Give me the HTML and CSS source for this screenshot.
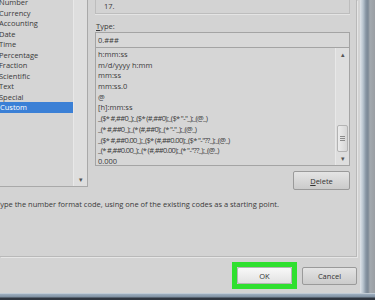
FILE: index.html
```html
<!DOCTYPE html>
<html>
<head>
  <meta charset="UTF-8">
  <title>Format Cells</title>
  <link rel="stylesheet" href="styles.css">
</head>
<body>
  <div class="window">
    <div class="dialog">
      <div class="panel">
        <div class="content">
          <div class="category-box">
            <ul class="category-list">
              <li>Number</li>
              <li>Currency</li>
              <li>Accounting</li>
              <li>Date</li>
              <li>Time</li>
              <li>Percentage</li>
              <li>Fraction</li>
              <li>Scientific</li>
              <li>Text</li>
              <li>Special</li>
              <li class="selected">Custom</li>
            </ul>
            <div class="scrollbar">
              <div class="track"></div>
              <div class="arrow">&#9662;</div>
            </div>
          </div>
          <div class="format-side">
            <div class="sample">17.</div>
            <div class="type-label"><u>T</u>ype:</div>
            <div class="type-input">0.###</div>
            <div class="type-box">
              <ul class="type-list">
                <li>h:mm:ss</li>
                <li>m/d/yyyy h:mm</li>
                <li>mm:ss</li>
                <li>mm:ss.0</li>
                <li>@</li>
                <li>[h]:mm:ss</li>
                <li class="code">_($* #,##0_);_($* (#,##0);_($* "-"_);_(@_)</li>
                <li class="code">_(* #,##0_);_(* (#,##0);_(* "-"_);_(@_)</li>
                <li class="code">_($* #,##0.00_);_($* (#,##0.00);_($* "-"??_);_(@_)</li>
                <li class="code">_(* #,##0.00_);_(* (#,##0.00);_(* "-"??_);_(@_)</li>
                <li>0.000</li>
              </ul>
              <div class="scrollbar">
                <div class="arrow">&#9652;</div>
                <div class="track">
                  <div class="thumb"><span></span><span></span><span></span></div>
                </div>
                <div class="arrow">&#9662;</div>
              </div>
            </div>
            <div class="delete-row">
              <button class="btn delete-btn"><u>D</u>elete</button>
            </div>
          </div>
        </div>
        <p class="hint">Type the number format code, using one of the existing codes as a starting point.</p>
      </div>
      <div class="footer">
        <div class="highlight">
          <button class="btn ok-btn">OK</button>
        </div>
        <button class="btn cancel-btn">Cancel</button>
      </div>
    </div>
    <div class="frame"></div>
  </div>
  <div class="taskbar"></div>
</body>
</html>
```

FILE: styles.css
```css
body {
  margin: 0;
  width: 375px;
  height: 300px;
  overflow: hidden;
  background: #2f3640;
  font-family: 'Open Sans', 'Noto Sans', sans-serif;
  font-size: 7.5px;
  color: #3a3a3a;
}

ul {
  list-style: none;
  margin: 0;
  padding: 0;
}

.window {
  display: flex;
  height: 293px;
}

.dialog {
  width: 360px;
  background: #d3d3d3;
  display: flex;
  flex-direction: column;
}

.frame {
  flex: 1;
  background: linear-gradient(to right, #dfe4ea 0, #b9c5d0 3px, #8593a2 6px, #7b8896 8px, #a3a9af 10px, #9a9ea3 15px);
}

.taskbar {
  height: 7px;
  background: linear-gradient(to bottom, #e2e6ea 0, #9eafc0 1px, #7f90a1 4px, #2f3640 5px);
}

.panel {
  width: 356px;
  height: 256px;
  border-right: 1px solid #b9b9b9;
  border-bottom: 1px solid #b9b9b9;
  box-shadow: 1px 1px 0 #e6e6e6;
}

.content {
  display: flex;
  align-items: flex-start;
}

/* category list */
.category-box {
  width: 87px;
  height: 186px;
  border-right: 1px solid #a9a9a9;
  border-bottom: 1px solid #a9a9a9;
  background: #d5d5d5;
  display: flex;
  overflow: hidden;
}

.category-list {
  flex: 1;
  margin-top: -3px;
}

.category-list li {
  height: 10.5px;
  line-height: 10.5px;
  margin-left: -1px;
  white-space: nowrap;
}

.category-list li.selected {
  background: #3b80d6;
  color: #fff;
  margin-left: 0;
}

.scrollbar {
  width: 13px;
  display: flex;
  flex-direction: column;
  background: #dedede;
  border-left: 1px solid #e8e8e8;
}

.scrollbar .track {
  flex: 1;
  display: flex;
  flex-direction: column;
  justify-content: flex-end;
}

.scrollbar .arrow {
  height: 13px;
  line-height: 13px;
  text-align: center;
  font-size: 7px;
  color: #555;
}

.thumb {
  height: 25px;
  margin: 0 1px;
  border: 1px solid #b3b3b3;
  border-radius: 2px;
  background: linear-gradient(to right, #ececec, #d6d6d6);
  display: flex;
  flex-direction: column;
  align-items: center;
  justify-content: center;
  gap: 1px;
}

.thumb span {
  width: 5px;
  height: 1px;
  background: #8a8a8a;
}

/* right side */
.format-side {
  width: 255px;
  margin-left: 7px;
  display: flex;
  flex-direction: column;
}

.sample {
  height: 13px;
  border: 1px solid #bdbdbd;
  border-top: none;
  padding-left: 8px;
  line-height: 12px;
  box-shadow: 0 1px 0 #e4e4e4;
}

.type-label {
  margin-top: 6px;
  height: 12px;
  line-height: 12px;
  padding-left: 1px;
}

.type-input {
  height: 14px;
  border: 1px solid #a4a4a4;
  background: #d8d8d8;
  padding-left: 2px;
  line-height: 14px;
}

.type-box {
  height: 117px;
  border: 1px solid #a4a4a4;
  border-top: none;
  background: #d6d6d6;
  display: flex;
}

.type-list {
  flex: 1;
  padding-top: 1px;
  padding-left: 2px;
}

.type-list li {
  height: 10.7px;
  line-height: 10.7px;
  white-space: nowrap;
}

.type-list li.code {
  letter-spacing: -0.65px;
}

.btn {
  font-family: inherit;
  font-size: 7.5px;
  color: #333;
  border: 1px solid #9a9a9a;
  border-radius: 2px;
  background: linear-gradient(to bottom, #e4e4e4, #cbcbcb);
  padding: 0;
}

.delete-row {
  display: flex;
  justify-content: flex-end;
  margin-top: 5px;
}

.delete-btn {
  width: 57px;
  min-width: 57px;
  height: 19px;
}

.hint {
  margin: 9px 0 0 -4px;
  line-height: 10px;
  white-space: nowrap;
}

/* footer buttons */
.footer {
  display: flex;
  justify-content: flex-end;
  align-items: flex-start;
  gap: 5px;
  padding: 5px 3px 0 0;
}

.highlight {
  border: 5px solid #2fe02f;
}

.ok-btn {
  display: block;
  width: 55px;
  height: 17px;
  border-color: #b5b5b5;
  background: linear-gradient(to bottom, #f8f8f8, #e2e2e2);
}

.cancel-btn {
  width: 55px;
  height: 18px;
  margin-top: 5px;
}
```
